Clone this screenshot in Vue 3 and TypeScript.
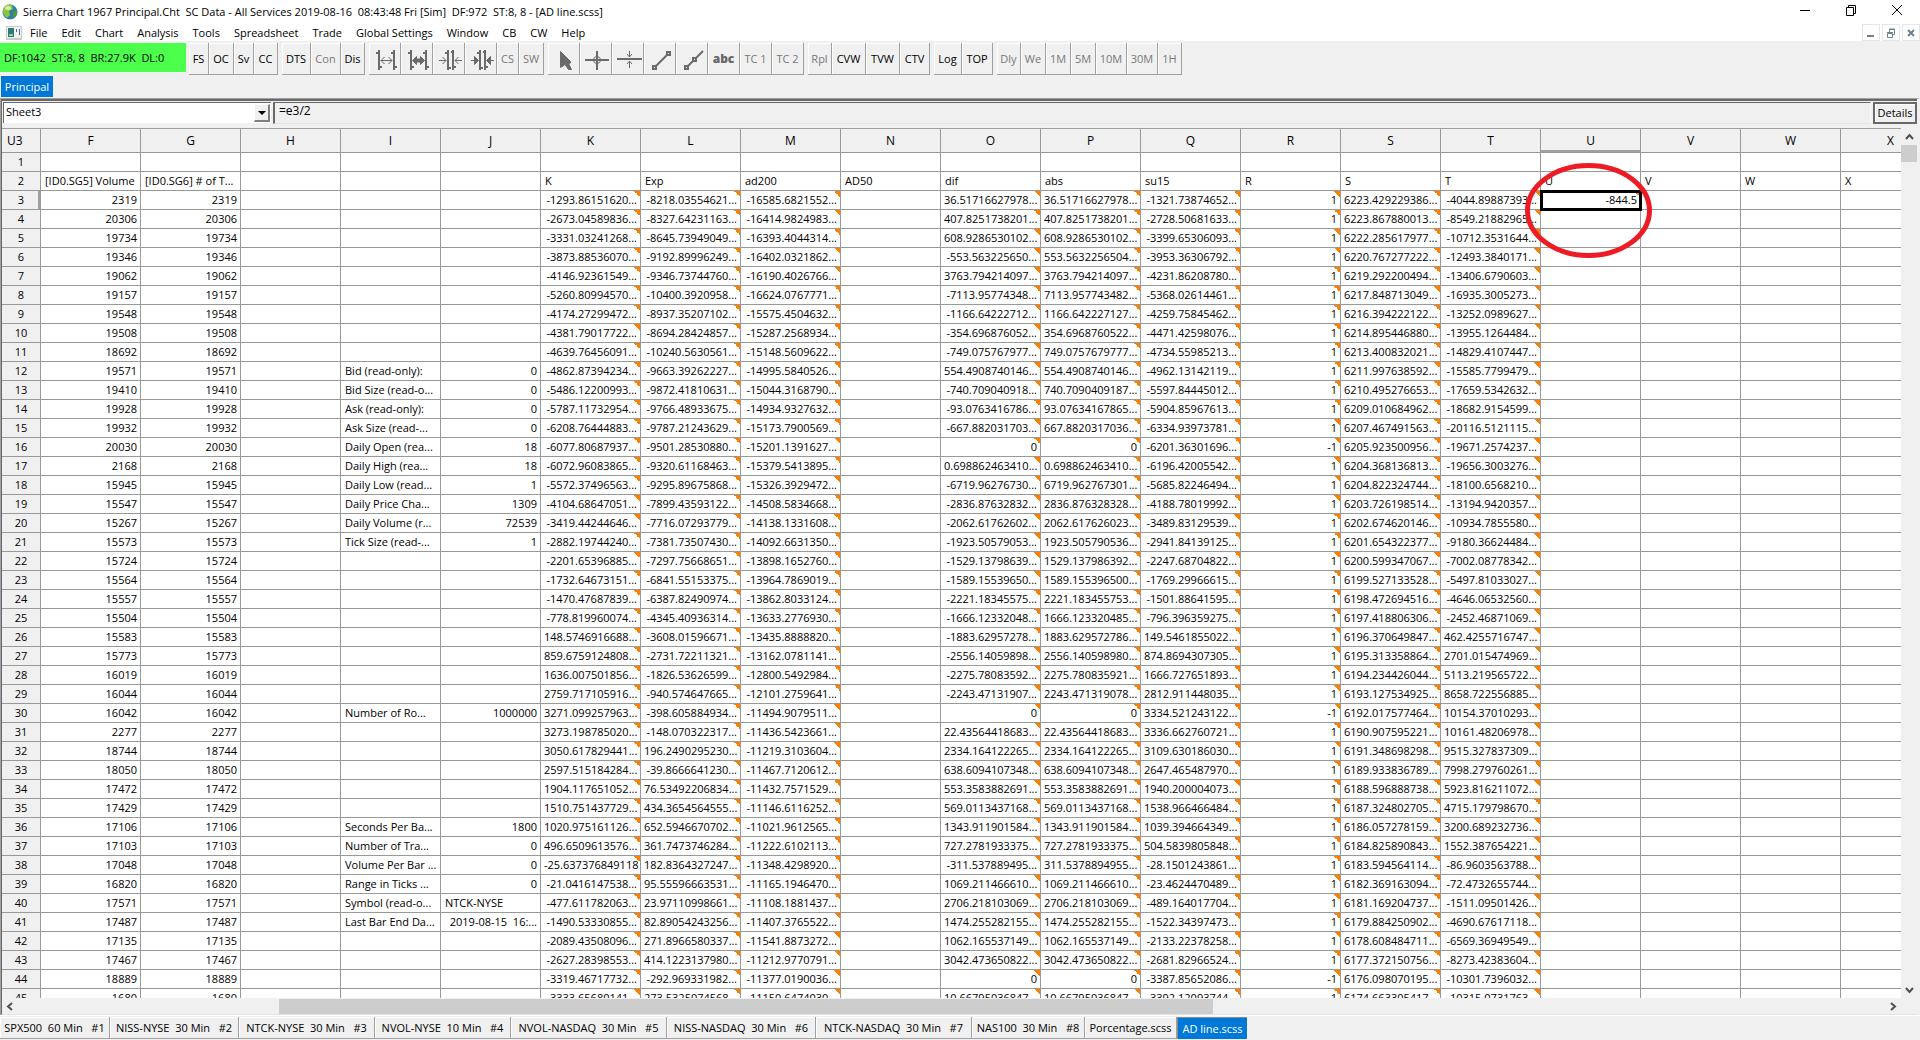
<script setup lang="ts">
import { ref } from 'vue'

type Tool = { label?: string; icon?: string; width: number; off?: boolean }
type Cell = { text: string; left: boolean; mark: boolean }

const menus = ['File', 'Edit', 'Chart', 'Analysis', 'Tools', 'Spreadsheet', 'Trade', 'Global Settings', 'Window', 'CB', 'CW', 'Help']

const toolGroups: Tool[][] = [
  [{ label: 'FS', width: 20 }, { label: 'OC', width: 25 }, { label: 'Sv', width: 20 }, { label: 'CC', width: 24 }],
  [{ label: 'DTS', width: 29 }, { label: 'Con', width: 30, off: true }, { label: 'Dis', width: 24 }],
  [
    { icon: 'widen', width: 32 },
    { icon: 'widenMore', width: 32 },
    { icon: 'narrow', width: 32 },
    { icon: 'narrowMore', width: 32 },
    { label: 'CS', width: 22, off: true },
    { label: 'SW', width: 25, off: true },
  ],
  [
    { icon: 'pointer', width: 32 },
    { icon: 'cross', width: 32 },
    { icon: 'tracker', width: 32 },
    { icon: 'line', width: 32 },
    { icon: 'ray', width: 32 },
    { icon: 'text', width: 32 },
    { label: 'TC 1', width: 32, off: true },
    { label: 'TC 2', width: 32, off: true },
  ],
  [{ label: 'Rpl', width: 24, off: true }, { label: 'CVW', width: 34 }, { label: 'TVW', width: 34 }, { label: 'CTV', width: 30 }],
  [{ label: 'Log', width: 28 }, { label: 'TOP', width: 31 }],
  [
    { label: 'Dly', width: 24, off: true },
    { label: 'We', width: 25, off: true },
    { label: '1M', width: 25, off: true },
    { label: '5M', width: 25, off: true },
    { label: '10M', width: 31, off: true },
    { label: '30M', width: 31, off: true },
    { label: '1H', width: 24, off: true },
  ],
]

const tabs = [
  { label: 'SPX500  60 Min   #1', width: 110 },
  { label: 'NISS-NYSE  30 Min   #2', width: 129 },
  { label: 'NTCK-NYSE  30 Min   #3', width: 136 },
  { label: 'NVOL-NYSE  10 Min   #4', width: 136 },
  { label: 'NVOL-NASDAQ  30 Min   #5', width: 156 },
  { label: 'NISS-NASDAQ  30 Min   #6', width: 149 },
  { label: 'NTCK-NASDAQ  30 Min   #7', width: 156 },
  { label: 'NAS100  30 Min   #8', width: 113 },
  { label: 'Porcentage.scss', width: 92 },
  { label: 'AD line.scss', width: 70 },
]
const activeTab = ref(9)
const sheet = ref('Sheet3')
const formula = ref('=e3/2')

const columns = 'FGHIJKLMNOPQRSTUVWX'.split('')
const titles: Record<string, string> = {
  F: '[ID0.SG5] Volume', G: '[ID0.SG6] # of T...', K: 'K', L: 'Exp', M: 'ad200', N: 'AD50', O: 'dif', P: 'abs',
  Q: 'su15', R: 'R', S: 'S', T: 'T', U: 'U', V: 'V', W: 'W', X: 'X',
}

const words = (s: string) => s.trim().split(/\s+/)
const volume = words(`2319 20306 19734 19346 19062 19157 19548 19508 18692 19571 19410 19928 19932 20030 2168 15945 15547
  15267 15573 15724 15564 15557 15504 15583 15773 16019 16044 16042 2277 18744 18050 17472 17429 17106 17103 17048 16820
  17571 17487 17135 17467 18889 1680`)

/* Values of the calculated columns from row 3 down; "~" stands for a cut-off value. */
const series: Record<string, string[]> = {
  F: volume,
  G: volume,
  K: words(`-1293.86151620~ -2673.04589836~ -3331.03241268~ -3873.88536070~ -4146.92361549~ -5260.80994570~
    -4174.27299472~ -4381.79017722~ -4639.76456091~ -4862.87394234~ -5486.12200993~ -5787.11732954~ -6208.76444883~
    -6077.80687937~ -6072.96083865~ -5572.37496563~ -4104.68647051~ -3419.44244646~ -2882.19744240~ -2201.65396885~
    -1732.64673151~ -1470.47687839~ -778.819960074~ 148.5746916688~ 859.6759124808~ 1636.007501856~ 2759.717105916~
    3271.099257963~ 3273.198785020~ 3050.617829441~ 2597.515184284~ 1904.117651052~ 1510.751437729~ 1020.975161126~
    496.6509613576~ -25.637376849118 -21.0416147538~ -477.611782063~ -1490.53330855~ -2089.43508096~ -2627.28398553~
    -3319.46717732~ -3333.65680141~`),
  L: words(`-8218.03554621~ -8327.64231163~ -8645.73949049~ -9192.89996249~ -9346.73744760~ -10400.3920958~
    -8937.35207102~ -8694.28424857~ -10240.5630561~ -9663.39262227~ -9872.41810631~ -9766.48933675~ -9787.21243629~
    -9501.28530880~ -9320.61168463~ -9295.89675868~ -7899.43593122~ -7716.07293779~ -7381.73507430~ -7297.75668651~
    -6841.55153375~ -6387.82490974~ -4345.40936314~ -3608.01596671~ -2731.72211321~ -1826.53626599~ -940.574647665~
    -398.605884934~ -148.070322317~ 196.2490295230~ -39.8666641230~ 76.53492206834~ 434.3654564555~ 652.5946670702~
    361.7473746284~ 182.8364327247~ 95.55596663531~ 23.97110998661~ 82.89054243256~ 271.8966580337~ 414.1223137980~
    -292.969331982~ 273.5325074568~`),
  M: words(`-16585.6821552~ -16414.9824983~ -16393.4044314~ -16402.0321862~ -16190.4026766~ -16624.0767771~
    -15575.4504632~ -15287.2568934~ -15148.5609622~ -14995.5840526~ -15044.3168790~ -14934.9327632~ -15173.7900569~
    -15201.1391627~ -15379.5413895~ -15326.3929472~ -14508.5834668~ -14138.1331608~ -14092.6631350~ -13898.1652760~
    -13964.7869019~ -13862.8033124~ -13633.2776930~ -13435.8888820~ -13162.0781141~ -12800.5492984~ -12101.2759641~
    -11494.9079511~ -11436.5423661~ -11219.3103604~ -11467.7120612~ -11432.7571529~ -11146.6116252~ -11021.9612565~
    -11222.6102113~ -11348.4298920~ -11165.1946470~ -11108.1881437~ -11407.3765522~ -11541.8873272~ -11212.9770791~
    -11377.0190036~ -11150.6474030~`),
  O: words(`36.51716627978~ 407.8251738201~ 608.9286530102~ -553.563225650~ 3763.794214097~ -7113.95774348~
    -1166.64222712~ -354.696876052~ -749.075767977~ 554.4908740146~ -740.709040918~ -93.0763416786~ -667.882031703~ 0
    0.698862463410~ -6719.96276730~ -2836.87632832~ -2062.61762602~ -1923.50579053~ -1529.13798639~ -1589.15539650~
    -2221.18345575~ -1666.12332048~ -1883.62957278~ -2556.14059898~ -2275.78083592~ -2243.47131907~ 0 22.43564418683~
    2334.164122265~ 638.6094107348~ 553.3583882691~ 569.0113437168~ 1343.911901584~ 727.2781933375~ -311.537889495~
    1069.211466610~ 2706.218103069~ 1474.255282155~ 1062.165537149~ 3042.473650822~ 0 10.66795036847~`),
  P: words(`36.51716627978~ 407.8251738201~ 608.9286530102~ 553.5632256504~ 3763.794214097~ 7113.957743482~
    1166.642227127~ 354.6968760522~ 749.0757679777~ 554.4908740146~ 740.7090409187~ 93.07634167865~ 667.8820317036~ 0
    0.698862463410~ 6719.962767301~ 2836.876328328~ 2062.617626023~ 1923.505790536~ 1529.137986392~ 1589.155396500~
    2221.183455753~ 1666.123320485~ 1883.629572786~ 2556.140598980~ 2275.780835921~ 2243.471319078~ 0 22.43564418683~
    2334.164122265~ 638.6094107348~ 553.3583882691~ 569.0113437168~ 1343.911901584~ 727.2781933375~ 311.5378894955~
    1069.211466610~ 2706.218103069~ 1474.255282155~ 1062.165537149~ 3042.473650822~ 0 10.66795036847~`),
  Q: words(`-1321.73874652~ -2728.50681633~ -3399.65306093~ -3953.36306792~ -4231.86208780~ -5368.02614461~
    -4259.75845462~ -4471.42598076~ -4734.55985213~ -4962.13142119~ -5597.84445012~ -5904.85967613~ -6334.93973781~
    -6201.36301696~ -6196.42005542~ -5685.82246494~ -4188.78019992~ -3489.83129539~ -2941.84139125~ -2247.68704822~
    -1769.29966615~ -1501.88641595~ -796.396359275~ 149.5461855022~ 874.8694307305~ 1666.727651893~ 2812.911448035~
    3334.521243122~ 3336.662760721~ 3109.630186030~ 2647.465487970~ 1940.200004073~ 1538.966466484~ 1039.394664349~
    504.5839805848~ -28.1501243861~ -23.4624470489~ -489.164017704~ -1522.34397473~ -2133.22378258~ -2681.82966524~
    -3387.85652086~ -3392.12093744~`),
  R: words('1 1 1 1 1 1 1 1 1 1 1 1 1 -1 1 1 1 1 1 1 1 1 1 1 1 1 1 -1 1 1 1 1 1 1 1 1 1 1 1 1 1 -1 1'),
  S: words(`6223.429229386~ 6223.867880013~ 6222.285617977~ 6220.767277222~ 6219.292200494~ 6217.848713049~
    6216.394222122~ 6214.895446880~ 6213.400832021~ 6211.997638592~ 6210.495276653~ 6209.010684962~ 6207.467491563~
    6205.923500956~ 6204.368136813~ 6204.822324744~ 6203.726198514~ 6202.674620146~ 6201.654322377~ 6200.599347067~
    6199.527133528~ 6198.472694516~ 6197.418806306~ 6196.370649847~ 6195.313358864~ 6194.234426044~ 6193.127534925~
    6192.017577464~ 6190.907595221~ 6191.348698298~ 6189.933836789~ 6188.596888738~ 6187.324802705~ 6186.057278159~
    6184.825890843~ 6183.594564114~ 6182.369163094~ 6181.169204737~ 6179.884250902~ 6178.608484711~ 6177.372150756~
    6176.098070195~ 6174.663305417~`),
  T: words(`-4044.89887393~ -8549.21882965~ -10712.3531644~ -12493.3840171~ -13406.6790603~ -16935.3005273~
    -13252.0989627~ -13955.1264484~ -14829.4107447~ -15585.7799479~ -17659.5342632~ -18682.9154599~ -20116.5121115~
    -19671.2574237~ -19656.3003276~ -18100.6568210~ -13194.9420357~ -10934.7855580~ -9180.36624484~ -7002.08778342~
    -5497.81033027~ -4646.06532560~ -2452.46871069~ 462.4255716747~ 2701.015474969~ 5113.219565722~ 8658.722556885~
    10154.37010293~ 10161.48206978~ 9515.327837309~ 7998.279760261~ 5923.816211072~ 4715.179798670~ 3200.689232736~
    1552.387654221~ -86.9603563788~ -72.4732655744~ -1511.09501426~ -4690.67617118~ -6569.36949549~ -8273.42383604~
    -10301.7396032~ -10315.0731763~`),
  U: ['-844.5'],
}

const info: Record<number, [string, string]> = {
  12: ['Bid (read-only):', '0'],
  13: ['Bid Size (read-o...', '0'],
  14: ['Ask (read-only):', '0'],
  15: ['Ask Size (read-...', '0'],
  16: ['Daily Open (rea...', '18'],
  17: ['Daily High (rea...', '18'],
  18: ['Daily Low (read...', '1'],
  19: ['Daily Price Cha...', '1309'],
  20: ['Daily Volume (r...', '72539'],
  21: ['Tick Size (read-...', '1'],
  30: ['Number of Ro...', '1000000'],
  36: ['Seconds Per Ba...', '1800'],
  37: ['Number of Tra...', '0'],
  38: ['Volume Per Bar ...', '0'],
  39: ['Range in Ticks ...', '0'],
  40: ['Symbol (read-o...', 'NTCK-NYSE'],
  41: ['Last Bar End Da...', '2019-08-15  16:...'],
}

function cellAt(col: string, row: number): Cell {
  if (row === 1) return { text: '', left: true, mark: false }
  if (row === 2) return { text: titles[col] ?? '', left: true, mark: false }
  if (col === 'I') return { text: info[row]?.[0] ?? '', left: true, mark: false }
  if (col === 'J') return { text: info[row]?.[1] ?? '', left: row === 40, mark: false }
  const text = (series[col]?.[row - 3] ?? '').replace('~', '...')
  return { text, left: false, mark: text !== '' && col > 'J' }
}

const rows = Array.from({ length: 45 }, (_, i) => ({
  number: i + 1,
  cells: columns.map((col) => ({ col, ...cellAt(col, i + 1) })),
}))
</script>

<template>
  <div class="window">
    <header class="titlebar">
      <svg class="globe" width="16" height="18" viewBox="0 0 16 18" aria-hidden="true">
        <circle cx="8" cy="9" r="7.5" fill="#2f7fae" />
        <path d="M2 4 Q6 0 10 2 L11 6 L7 8 L8 12 L5 15 Q0 11 1 6 Z" fill="#8cc63f" />
        <path d="M11 9 L15 7 Q16 12 11 15 Z" fill="#4f9a2c" />
        <ellipse cx="6" cy="5" rx="3" ry="2" fill="#e9f6b8" opacity=".8" />
      </svg>
      <h1>Sierra Chart 1967 Principal.Cht&nbsp; SC Data - All Services 2019-08-16&nbsp; 08:43:48 Fri [Sim]&nbsp; DF:972&nbsp; ST:8, 8 - [AD line.scss]</h1>
      <div class="caption">
        <button aria-label="Minimize"><svg width="12" height="12" viewBox="0 0 12 12"><path d="M1 6.5H11" /></svg></button>
        <button aria-label="Restore"><svg width="12" height="12" viewBox="0 0 12 12"><path d="M1.5 3.5H8.5V11.5H1.5ZM3.5 3.5V1.5H10.5V9.5H8.5" /></svg></button>
        <button aria-label="Close"><svg width="12" height="12" viewBox="0 0 12 12"><path d="M1 1L11 11M11 1L1 11" /></svg></button>
      </div>
    </header>

    <nav class="menubar">
      <svg class="doc" width="16" height="14" viewBox="0 0 16 14" aria-hidden="true">
        <path d="M0 0H16V14H0Z" fill="#c9c9c9" />
        <path d="M1 1H15V12H1Z" fill="#f4f4f4" />
        <path d="M2 2H8V11H2Z" fill="#2b7a78" />
        <path d="M3 8H7V10H3Z" fill="#8fd0a8" />
        <path d="M10 3H11V6H10ZM13 3H14V9H13Z" fill="#3c6fa8" />
      </svg>
      <a v-for="m in menus" :key="m" href="#">{{ m }}</a>
      <div class="mdi">
        <button aria-label="Minimize document"><svg width="10" height="10" viewBox="0 0 10 10"><path d="M1 8H8" stroke-width="2" /></svg></button>
        <button aria-label="Restore document"><svg width="10" height="10" viewBox="0 0 10 10"><path d="M1.5 5.5H6.5V9.5H1.5ZM1 4.5H7M3.5 4V1.5H8.5V6.5H7M3 1H9" /></svg></button>
        <button aria-label="Close document"><svg width="10" height="10" viewBox="0 0 10 10"><path d="M2 2L8 8M8 2L2 8" stroke-width="2" /></svg></button>
      </div>
    </nav>

    <div class="toolbar">
      <output class="status">DF:1042&nbsp; ST:8, 8&nbsp; BR:27.9K&nbsp; DL:0</output>
      <div v-for="(group, g) in toolGroups" :key="g" class="group">
        <button
          v-for="(t, i) in group"
          :key="i"
          :class="{ off: t.off }"
          :aria-label="t.label ?? t.icon"
          :style="{ width: t.width + 'px' }"
        >
          <template v-if="t.label">{{ t.label }}</template>
          <strong v-else-if="t.icon === 'text'">abc</strong>
          <svg v-else width="31" height="31" viewBox="0 0 31 31">
            <g v-if="t.icon === 'widen' || t.icon === 'widenMore'">
              <path d="M10 7V27M25 7V27" stroke-width="2" />
              <path d="M7 10H9M11 24H13M22 10H24M26 24H28" stroke-width="2" />
              <path v-if="t.icon === 'widen'" d="M12 17.5H23M15.5 14L12 17.5L15.5 21M19.500 14L23 17.5L19.500 21" />
              <path v-else d="M11.500 17.500L15.500 13.500V16H19.500V13.500L23.500 17.500L19.500 21.500V19H15.500V21.500Z" class="solid" />
            </g>
            <g v-else-if="t.icon === 'narrow' || t.icon === 'narrowMore'">
              <path d="M15 7V27M20 7V27" stroke-width="2" />
              <path d="M12 10H14M16 25H18M18 9H19M21 24H23" stroke-width="2" />
              <path d="M6 17.500H13M29 17.500H22" />
              <path v-if="t.icon === 'narrow'" d="M9.500 14L13 17.500L9.500 21M25.500 14L22 17.500L25.500 21" />
              <path v-else d="M9.500 13.500L13.500 17.500L9.500 21.500ZM25.500 13.500L21.500 17.500L25.500 21.500Z" class="solid" />
            </g>
            <path v-else-if="t.icon === 'pointer'" d="M12.500 8.500L22.500 18.500V20L20.500 20.500L23.500 26.500H20.500L17 21.500L12.500 24.500Z" class="solid" />
            <g v-else-if="t.icon === 'cross'">
              <path d="M5 17H29M17 8V27" stroke-width="2" />
              <circle cx="17" cy="17" r="3.5" />
            </g>
            <g v-else-if="t.icon === 'tracker'">
              <path d="M5 16H30" stroke-width="2" />
              <path d="M17.500 8V14M15 11L17.500 14L20 11M17.500 18V25M15 21L17.500 18L20 21" />
            </g>
            <g v-else-if="t.icon === 'line'">
              <path d="M11 24L23 12" stroke-width="2" />
              <path d="M9 23H12V26H9ZM23 9H26V12H23Z" stroke-width="2" class="node" />
            </g>
            <g v-else>
              <path d="M11 24L27 8" stroke-width="2" />
              <path d="M9 23H12V26H9ZM17 15H20V18H17Z" stroke-width="2" class="node" />
            </g>
          </svg>
        </button>
      </div>
    </div>

    <div class="chartbook"><button>Principal</button></div>

    <main class="document">
      <div class="entry">
        <div class="combo">
          <select v-model="sheet" aria-label="Sheet"><option>Sheet3</option></select>
          <span class="drop" aria-hidden="true"><svg width="8" height="4" viewBox="0 0 8 4"><path d="M0 0H8L4 4Z" /></svg></span>
        </div>
        <input v-model="formula" aria-label="Formula" />
        <button>Details</button>
      </div>

      <div class="body">
        <div class="sheet">
          <table>
            <colgroup>
              <col class="rowcol" />
              <col v-for="c in columns" :key="c" />
            </colgroup>
            <thead>
              <tr>
                <th class="corner">U3</th>
                <th v-for="c in columns" :key="c" scope="col" :class="{ current: c === 'U' }">{{ c }}</th>
              </tr>
            </thead>
            <tbody>
              <tr v-for="r in rows" :key="r.number">
                <th scope="row" :class="{ current: r.number === 3 }">{{ r.number }}</th>
                <td
                  v-for="c in r.cells"
                  :key="c.col"
                  :class="{ left: c.left, mark: c.mark, selected: c.col === 'U' && r.number === 3 }"
                >{{ c.text }}</td>
              </tr>
            </tbody>
          </table>
          <svg class="ring" width="127" height="95" viewBox="0 0 127 95" aria-hidden="true">
            <ellipse cx="63.5" cy="47.5" rx="61" ry="45" />
          </svg>
        </div>
        <div class="vscroll">
          <button aria-label="Scroll up"><svg width="9" height="8" viewBox="0 0 9 8"><path d="M1 6L4.5 2L8 6" /></svg></button>
          <div class="vthumb"></div>
          <button class="end" aria-label="Scroll down"><svg width="9" height="8" viewBox="0 0 9 8"><path d="M1 2L4.5 6L8 2" /></svg></button>
        </div>
      </div>
      <div class="hscroll">
        <button aria-label="Scroll left"><svg width="8" height="9" viewBox="0 0 8 9"><path d="M6 1L2 4.5L6 8" /></svg></button>
        <div class="track"><div class="hthumb"></div></div>
        <button aria-label="Scroll right"><svg width="8" height="9" viewBox="0 0 8 9"><path d="M2 1L6 4.5L2 8" /></svg></button>
      </div>
    </main>

    <footer class="tabs">
      <button
        v-for="(t, i) in tabs"
        :key="t.label"
        :class="{ active: i === activeTab }"
        :style="{ width: t.width + 'px' }"
        @click="activeTab = i"
      >{{ t.label }}</button>
    </footer>
  </div>
</template>

<style>
body {
  margin: 0;
}
</style>

<style scoped>
* {
  box-sizing: border-box;
}
.window {
  display: flex;
  flex-direction: column;
  height: 100vh;
  overflow: hidden;
  background: #f0f0f0;
  color: #000;
  font: 11px/16px 'Open Sans', 'Noto Sans', sans-serif;
}
button,
input,
select {
  margin: 0;
  padding: 0;
  border: 0;
  border-radius: 0;
  background: none;
  color: inherit;
  font: inherit;
}
svg {
  display: block;
}

/* Title and menus */
.titlebar {
  display: flex;
  align-items: center;
  flex: none;
  height: 24px;
  padding-left: 2px;
  background: #fff;
}
h1 {
  flex: 1;
  margin: 0 0 0 5px;
  font: inherit;
  white-space: nowrap;
}
.caption {
  display: flex;
  height: 20px;
  align-self: flex-start;
}
.caption button {
  display: grid;
  place-items: center;
  width: 46px;
}
.caption path {
  fill: none;
  stroke: #000;
}
.menubar {
  display: flex;
  align-items: center;
  flex: none;
  gap: 14px;
  height: 17px;
  padding-left: 6px;
  background: #fff;
}
.doc {
  margin-right: -6px;
}
.menubar a {
  color: #000;
  text-decoration: none;
  white-space: nowrap;
}
.mdi {
  display: flex;
  gap: 2px;
  margin-left: auto;
}
.mdi button {
  display: grid;
  place-items: center;
  width: 18px;
  height: 17px;
  border: 1px solid #e6e6e6;
  background: #fff;
}
.mdi path {
  fill: none;
  stroke: #6f8090;
}

/* Toolbar */
.toolbar {
  display: flex;
  align-items: flex-start;
  flex: none;
  gap: 4px;
  height: 35px;
  padding-top: 2px;
  white-space: nowrap;
}
.status {
  width: 186px;
  height: 29px;
  margin-right: -1px;
  padding-left: 4px;
  background: #4cff4c;
  line-height: 29px;
}
.group {
  display: flex;
  height: 32px;
}
.group button {
  display: flex;
  align-items: center;
  justify-content: center;
  border: solid #a0a0a0;
  border-width: 0 1px 1px 0;
  box-shadow: inset 1px 1px #fff;
}
.group button.off {
  color: #787878;
}
.group strong {
  color: #666;
  font-size: 12px;
  font-weight: 800;
}
.group path,
.group circle {
  fill: none;
  stroke: #6a6a6a;
}
.group .solid {
  fill: #6a6a6a;
}
.group .node {
  fill: #f0f0f0;
}
.chartbook {
  flex: none;
  height: 22px;
  padding-left: 1px;
}
.chartbook button {
  width: 52px;
  height: 21px;
  background: #0078d7;
  color: #fff;
}

/* Document window */
.document {
  display: flex;
  flex: 1;
  flex-direction: column;
  min-height: 0;
  border: solid #a0a0a0;
  border-width: 1px 0 0 1px;
  border-right: 3px solid #f0f0f0;
}
.entry {
  display: flex;
  flex: none;
  gap: 2px;
  height: 29px;
  padding: 1px 0 4px 1px;
  border-top: 2px solid #696969;
  border-left: 1px solid #696969;
}
.combo {
  display: flex;
  align-self: flex-start;
  width: 268px;
  height: 21px;
  padding-right: 1px;
  border: solid #696969;
  border-width: 1px 0 0 1px;
  background: #fff;
}
.combo select {
  flex: 1;
  height: 18px;
  padding: 0 2px;
  appearance: none;
}
.drop {
  display: grid;
  place-items: center;
  width: 16px;
  height: 18px;
  margin-top: 1px;
  border: solid;
  border-width: 1px 2px 2px 1px;
  border-color: #fff #808080 #808080 #fff;
  background: #f0f0f0;
  pointer-events: none;
}
.entry input {
  flex: 1;
  padding: 0 4px 4px;
  border: 1px solid #696969;
  border-color: #696969 #f8f8f8 #e3e3e3 #696969;
  border-left-width: 2px;
  font-size: 12px;
}
.entry button {
  width: 44px;
  border: 2px solid #696969;
  box-shadow: inset 1px 1px #fff;
}
.body {
  display: flex;
  flex: 1;
  min-height: 0;
  border-left: 1px solid #696969;
}
.sheet {
  position: relative;
  flex: 1;
  min-width: 0;
  overflow: hidden;
  border-top: 1px solid #a0a0a0;
  background: #fff;
}
table {
  width: 1939px;
  table-layout: fixed;
  border-spacing: 0;
}
col {
  width: 100px;
}
.rowcol {
  width: 39px;
}
th,
td {
  height: 19px;
  padding: 0 3px;
  border: solid #999;
  border-width: 0 1px 1px 0;
  line-height: 18px;
  text-align: right;
  white-space: pre;
}
th {
  background: #f0f0f0;
  font-weight: 400;
  text-align: center;
}
thead th {
  height: 24px;
  font-size: 12px;
  line-height: 23px;
}
.corner {
  padding-left: 5px;
  text-align: left;
}
thead .current {
  box-shadow: inset 0 -2px #a0a0a0;
}
tbody .current {
  box-shadow: inset -2px 0 #a0a0a0;
}
td.left {
  padding-left: 4px;
  text-align: left;
}
.mark {
  background: linear-gradient(45deg, transparent 50%, #ff8000 50%) top right / 6px 6px no-repeat;
}
.selected {
  position: relative;
}
.selected::after {
  content: '';
  position: absolute;
  inset: -1px -2px -2px -1px;
  border: 3px solid #000;
}
.ring {
  position: absolute;
  top: 34px;
  left: 1523px;
}
.ring ellipse {
  fill: none;
  stroke: #ed1c24;
  stroke-width: 5;
}

/* Scroll bars */
.vscroll {
  display: flex;
  flex-direction: column;
  width: 16px;
}
.vscroll button,
.hscroll button {
  display: grid;
  place-items: center;
  width: 16px;
  height: 17px;
}
.vscroll path,
.hscroll path {
  fill: none;
  stroke: #505050;
  stroke-width: 2;
}
.vthumb {
  height: 17px;
  background: #cdcdcd;
}
.vscroll .end {
  margin-top: auto;
}
.hscroll {
  display: flex;
  flex: none;
  height: 17px;
  padding-right: 16px;
  border-left: 1px solid #696969;
  border-bottom: 1px solid #e3e3e3;
}
.track {
  display: grid;
  grid-template-columns: 14fr 50fr 36fr;
  flex: 1;
  padding-top: 1px;
}
.hthumb {
  grid-column: 2;
  height: 15px;
  background: #cdcdcd;
}

/* Bottom tabs */
.tabs {
  display: flex;
  flex: none;
  height: 25px;
  padding: 1px 0;
  border-top: 1px solid #fff;
}
.tabs button {
  flex: none;
  border: solid #a0a0a0;
  border-width: 0 1px 1px 0;
  box-shadow: inset 1px 1px #fff;
  white-space: pre;
}
.tabs .active {
  border: 1px solid #8c8c8c;
  border-width: 1px 0 0 1px;
  background: #0078d7;
  box-shadow: none;
  color: #fff;
}
</style>
